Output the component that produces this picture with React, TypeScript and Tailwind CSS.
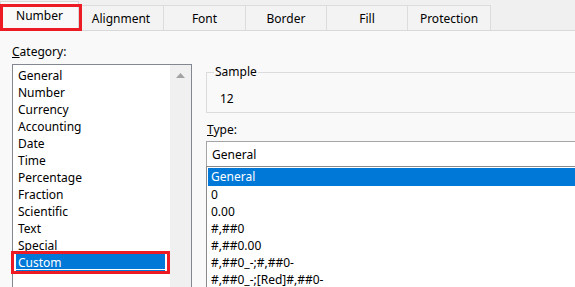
import React from "react";

const tabs = [
  { label: "Alignment", w: "w-[85px]" },
  { label: "Font", w: "w-[82px]" },
  { label: "Border", w: "w-[81px]" },
  { label: "Fill", w: "w-[81px]" },
  { label: "Protection", w: "w-[83px]" },
];

const categories = [
  "General",
  "Number",
  "Currency",
  "Accounting",
  "Date",
  "Time",
  "Percentage",
  "Fraction",
  "Scientific",
  "Text",
  "Special",
];

const types = [
  "0",
  "0.00",
  "#,##0",
  "#,##0.00",
  "#,##0_-;#,##0-",
  "#,##0_-;[Red]#,##0-",
];

export default function App() {
  return (
    <div className="w-[575px] h-[287px] overflow-hidden bg-[#f9f9f9] text-[12px] leading-[17px] text-black font-['Noto_Sans',sans-serif]">
      {/* Tab strip */}
      <div className="relative flex items-end h-[31px] bg-[#f0f0f0] border-b border-[#d9d9d9]">
        <div className="flex items-center justify-center w-[79px] h-[29px] bg-[#f9f9f9] border-t border-x border-[#d9d9d9] pb-[2px]">
          Number
        </div>
        {tabs.map((t) => (
          <div
            key={t.label}
            className={`flex items-center justify-center ${t.w} h-[25px] bg-[#f3f3f3] border-t border-r border-[#dcdcdc] pt-[1px]`}
          >
            {t.label}
          </div>
        ))}
        <div className="absolute left-0 top-[4px] w-[82px] h-[27px] border-[3px] border-[#ed1c24]" />
      </div>

      {/* Body */}
      <div className="flex items-start pl-[12px]">
        {/* Category column */}
        <div className="flex flex-col w-[180px] shrink-0">
          <div className="mt-[12px] h-[17px]">
            <span className="underline">C</span>ategory:
          </div>
          <div className="mt-[4px] flex h-[240px] border border-[#828790] bg-white">
            <div className="flex-1 flex flex-col pt-[2px]">
              {categories.map((c) => (
                <div key={c} className="h-[17px] ml-[3px] mr-[5px] pl-[2px]">
                  {c}
                </div>
              ))}
              <div className="relative h-[17px] ml-[3px] mr-[5px] pl-[2px] bg-[#0078d7] text-white shadow-[inset_0_-1px_0_#0078d7,inset_0_-2px_0_#ffffff]">
                Custom
                <div className="absolute -left-[5px] -top-[3px] w-[159px] h-[23px] border-[3px] border-[#ed1c24]" />
              </div>
            </div>
            <div className="w-[21px] bg-[#f0f0f0] flex justify-center pt-[8px]">
              <svg width="9" height="5" viewBox="0 0 9 5">
                <path d="M0 5 L4.5 0 L9 5 Z" fill="#a3a3a3" />
              </svg>
            </div>
          </div>
        </div>

        {/* Right column */}
        <div className="ml-[14px] w-[400px] shrink-0 flex flex-col mt-[33px]">
          <fieldset className="border border-[#dcdcdc] pl-[13px] pt-[10px] pb-[5px]">
            <legend className="ml-[-6px] px-[1px] leading-[16px]">Sample</legend>
            <div className="h-[17px]">12</div>
          </fieldset>
          <div className="mt-[8px] h-[17px] pl-[1px]">
            <span className="underline">T</span>ype:
          </div>
          <div className="mt-[3px] h-[25px] flex items-center pl-[5px] bg-white border-t border-l border-[#a5a5a5]">
            General
          </div>
          <div className="flex flex-col h-[130px] bg-white border-t border-l border-[#8a8a8a]">
            <div className="mt-[1px] ml-[1px] h-[18px] leading-[18px] pl-[3px] bg-[#0078d7] text-white">General</div>
            {types.map((t) => (
              <div key={t} className="ml-[1px] h-[17px] pl-[3px]">
                {t}
              </div>
            ))}
          </div>
        </div>
      </div>
    </div>
  );
}
